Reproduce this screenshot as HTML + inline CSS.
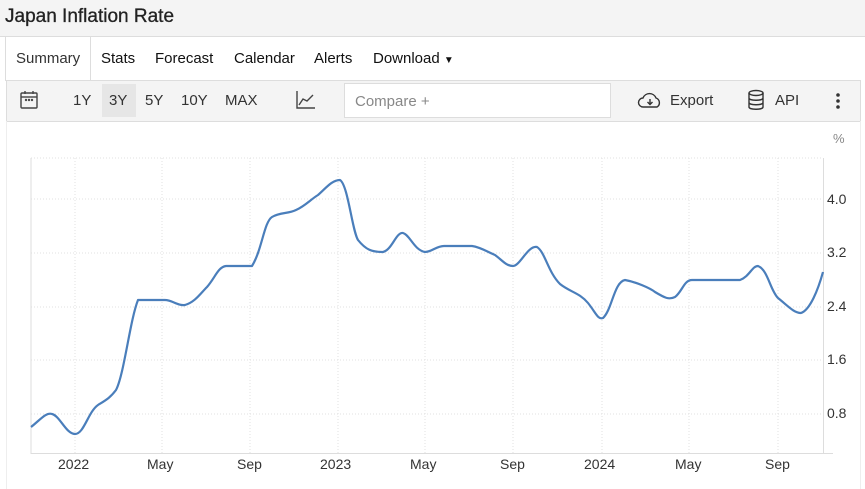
<!DOCTYPE html>
<html><head><meta charset="utf-8"><style>
body{margin:0;width:865px;height:489px;overflow:hidden;background:#fff;font-family:"Liberation Sans",sans-serif;position:relative}
.title{position:absolute;left:0;top:0;width:865px;height:36px;background:#f4f4f4;border-bottom:1px solid #ddd}
.title span{position:absolute;left:5px;top:6px;font-size:19px;color:#222;-webkit-text-stroke:0.3px #222}
.tabs{position:absolute;top:37px;left:0;width:865px;height:43px;font-size:15px;color:#111}
.tab{position:absolute;top:13px}
.active{position:absolute;left:5px;top:0;width:84px;height:44px;border-left:1px solid #ddd;border-right:1px solid #ddd;background:#fff;color:#333}
.tb{position:absolute;left:6px;top:80px;width:853px;height:40px;background:#f4f4f4;border:1px solid #ddd;font-size:15px;color:#333}
.tb span{position:absolute;top:11px}
.cmp{position:absolute;left:337px;top:2px;width:265px;height:33px;background:#fff;border:1px solid #ddd}
.chart{position:absolute;left:6px;top:121px;width:853px;height:368px;border-left:1px solid #eee;border-right:1px solid #eee}
.yl{position:absolute;left:827px;font-size:14px;color:#333}
.xl{position:absolute;top:456px;font-size:14px;color:#333}
</style></head><body>
<div class="title"><span>Japan Inflation Rate</span></div>
<div class="tabs">
<div class="active"><span style="position:absolute;left:10px;top:13px">Summary</span></div>
<span class="tab" style="left:101px">Stats</span>
<span class="tab" style="left:155px">Forecast</span>
<span class="tab" style="left:234px">Calendar</span>
<span class="tab" style="left:314px">Alerts</span>
<span class="tab" style="left:373px">Download <span style="font-size:10px">&#9660;</span></span>
</div>
<div class="tb">
<svg style="position:absolute;left:12px;top:9px" width="20" height="20" viewBox="0 0 20 20" fill="none" stroke="#444" stroke-width="1.4"><rect x="2" y="3" width="16" height="15" rx="1"/><line x1="2" y1="7" x2="18" y2="7"/><line x1="6" y1="1" x2="6" y2="4"/><line x1="14" y1="1" x2="14" y2="4"/><circle cx="7" cy="10" r=".5"/><circle cx="10" cy="10" r=".5"/><circle cx="13" cy="10" r=".5"/></svg>
<span style="left:66px">1Y</span>
<div style="position:absolute;left:95px;top:3px;width:34px;height:33px;background:#e6e6e6"></div>
<span style="left:102px">3Y</span>
<span style="left:138px">5Y</span>
<span style="left:174px">10Y</span>
<span style="left:218px">MAX</span>
<svg style="position:absolute;left:289px;top:9px" width="20" height="20" viewBox="0 0 20 20" fill="none" stroke="#444" stroke-width="1.4"><path d="M1 1V18H19"/><path d="M3 15L7 9L11 11L17 5"/></svg>
<div class="cmp"><span style="left:10px;top:9px;color:#888">Compare +</span></div>
<svg style="position:absolute;left:630px;top:10px" width="26" height="18" viewBox="0 0 26 18" fill="none" stroke="#333" stroke-width="1.4"><path d="M6 16H20A5 5 0 0 0 19 7A7 7 0 0 0 6 7A4.5 4.5 0 0 0 6 16Z"/><path d="M13 8V13M10.5 11L13 13.5L15.5 11" /></svg>
<span style="left:663px">Export</span>
<svg style="position:absolute;left:740px;top:8px" width="18" height="22" viewBox="0 0 18 22" fill="none" stroke="#333" stroke-width="1.4"><ellipse cx="9" cy="4" rx="7" ry="2.5"/><path d="M2 4V18C2 21 16 21 16 18V4M2 9C2 12 16 12 16 9M2 13.5C2 16.5 16 16.5 16 13.5"/></svg>
<span style="left:768px">API</span>
<svg style="position:absolute;left:828px;top:11px" width="6" height="18"><circle cx="3" cy="3" r="1.8" fill="#333"/><circle cx="3" cy="9" r="1.8" fill="#333"/><circle cx="3" cy="15" r="1.8" fill="#333"/></svg>
</div>
<div class="chart"></div>
<svg style="position:absolute;left:0;top:0" width="865" height="489">
<g stroke="#e2e2e2" stroke-dasharray="1,2" stroke-width="1">
<line x1="31" y1="158" x2="823" y2="158"/><line x1="31" y1="199" x2="823" y2="199"/><line x1="31" y1="253" x2="823" y2="253"/><line x1="31" y1="307" x2="823" y2="307"/><line x1="31" y1="360" x2="823" y2="360"/><line x1="31" y1="414" x2="823" y2="414"/>
<line x1="75" y1="158" x2="75" y2="453"/><line x1="162" y1="158" x2="162" y2="453"/><line x1="250" y1="158" x2="250" y2="453"/><line x1="338" y1="158" x2="338" y2="453"/><line x1="425" y1="158" x2="425" y2="453"/><line x1="513" y1="158" x2="513" y2="453"/><line x1="602" y1="158" x2="602" y2="453"/><line x1="689" y1="158" x2="689" y2="453"/><line x1="778" y1="158" x2="778" y2="453"/>
</g>
<line x1="31" y1="158" x2="31" y2="454" stroke="#ddd"/>
<line x1="31" y1="453.5" x2="833" y2="453.5" stroke="#ddd"/>
<line x1="823.5" y1="158" x2="823.5" y2="454" stroke="#ddd"/>
<path fill="none" stroke="#4a7ebb" stroke-width="2.2" stroke-linejoin="round" d="M31 427C40 420 46 412 52 414C60 416 66 434 75 434C84 434 88 412 98 405C106 400 110 398 116 390C124 375 130 320 138 300L165 300C172 300 178 306 185 305C195 302 200 294 207 287C215 278 218 267 226 266L252 266C262 250 264 222 272 217C280 212 288 214 296 210C305 206 310 200 318 195C326 188 332 180 340 180C348 185 352 230 358 240C366 250 372 252 383 252C392 250 396 232 403 233C410 235 414 250 425 252C432 252 436 246 444 246L472 246C480 247 488 252 495 255C502 260 506 266 513 266C520 266 528 245 537 247C545 252 548 272 560 284C570 292 580 293 588 303C596 313 598 320 603 318C612 310 614 282 625 280C636 282 650 288 655 292C665 298 669 300 675 297C682 292 684 280 692 280L740 280C750 276 752 266 758 266C768 270 770 290 778 298C788 306 794 313 801 313C810 310 818 290 823 272"/>
<text x="833" y="143" font-size="13" fill="#888" font-family="Liberation Sans">%</text>
</svg>
<span class="yl" style="top:191px">4.0</span>
<span class="yl" style="top:244px">3.2</span>
<span class="yl" style="top:298px">2.4</span>
<span class="yl" style="top:351px">1.6</span>
<span class="yl" style="top:405px">0.8</span>
<span class="xl" style="left:58px">2022</span>
<span class="xl" style="left:147px">May</span>
<span class="xl" style="left:237px">Sep</span>
<span class="xl" style="left:320px">2023</span>
<span class="xl" style="left:410px">May</span>
<span class="xl" style="left:500px">Sep</span>
<span class="xl" style="left:584px">2024</span>
<span class="xl" style="left:675px">May</span>
<span class="xl" style="left:765px">Sep</span>
</body></html>
